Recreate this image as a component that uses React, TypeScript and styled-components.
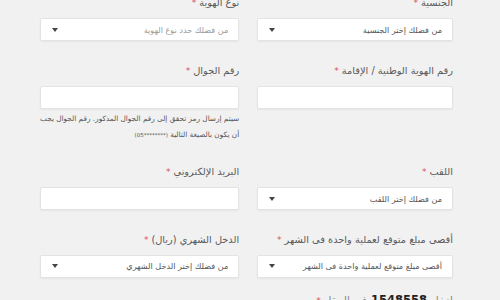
import React from "react";
import styled, { createGlobalStyle } from "styled-components";

const GlobalStyle = createGlobalStyle`
  html, body {
    margin: 0;
    padding: 0;
    background: #f1f1f1;
  }
`;

const Page = styled.div`
  width: 500px;
  height: 300px;
  overflow: hidden;
  box-sizing: border-box;
  padding: 0 47px 0 40px;
  direction: rtl;
  font-family: "DejaVu Sans", "Noto Sans", sans-serif;
  color: #555;
`;

const Form = styled.div`
  margin-top: -4px;
  display: grid;
  grid-template-columns: 1fr 1fr;
  column-gap: 18px;
  row-gap: 22.5px;
  align-items: start;
`;

const Field = styled.div`
  display: flex;
  flex-direction: column;
`;

const Label = styled.label`
  font-size: 9.8px;
  line-height: 14px;
  height: 14px;
  margin-bottom: 8px;
  color: #5a5a5a;
  white-space: nowrap;
`;

const Star = styled.span`
  color: #d9534f;
  font-size: 9px;
  margin-right: 3px;
`;

const Box = styled.div`
  box-sizing: border-box;
  height: 23px;
  background: #fff;
  border: 1px solid #e3e3e3;
  border-radius: 2px;
  box-shadow: 0 1px 2px rgba(0, 0, 0, 0.05);
`;

const SelectBox = styled(Box)<{ $muted?: boolean }>`
  display: flex;
  align-items: center;
  justify-content: space-between;
  padding: 0 10px 0 11px;
  font-size: 8.1px;
  color: ${(p) => (p.$muted ? "#9a9a9a" : "#555")};
  white-space: nowrap;
`;

const Caret = styled.span`
  width: 0;
  height: 0;
  border-left: 3.5px solid transparent;
  border-right: 3.5px solid transparent;
  border-top: 4px solid #444;
`;

const Help = styled.p`
  margin: 2px 0 0;
  font-size: 7.3px;
  line-height: 16px;
  color: #555;
  white-space: nowrap;
`;

const Small = styled.bdi`
  font-size: 5.5px;
  direction: ltr;
`;

const Code = styled.div`
  grid-column: 1 / 2;
  margin-top: -10px;
  font-size: 10.5px;
  line-height: 20px;
  color: #888;
  white-space: nowrap;
  b {
    color: #222;
    font-size: 11.5px;
    margin: 0 4px;
  }
`;

const Select: React.FC<{ text: string; muted?: boolean }> = ({ text, muted }) => (
  <SelectBox $muted={muted}>
    <span>{text}</span>
    <Caret />
  </SelectBox>
);

const Req: React.FC<{ children: React.ReactNode }> = ({ children }) => (
  <Label>
    {children}
    <Star>*</Star>
  </Label>
);

export default function App() {
  return (
    <Page>
      <GlobalStyle />
      <Form>
        <Field>
          <Req>الجنسية</Req>
          <Select text="من فضلك إختر الجنسية" />
        </Field>
        <Field>
          <Req>نوع الهوية</Req>
          <Select text="من فضلك حدد نوع الهوية" muted />
        </Field>

        <Field>
          <Req>رقم الهوية الوطنية / الإقامة</Req>
          <Box />
        </Field>
        <Field>
          <Req>رقم الجوال</Req>
          <Box />
          <Help>
            سيتم إرسال رمز تحقق إلى رقم الجوال المذكور. رقم الجوال يجب
            <br />
            أن يكون بالصيغة التالية <Small>(05********)</Small>
          </Help>
        </Field>

        <Field>
          <Req>اللقب</Req>
          <Select text="من فضلك إختر اللقب" />
        </Field>
        <Field>
          <Req>البريد الإلكتروني</Req>
          <Box />
        </Field>

        <Field>
          <Req>أقصى مبلغ متوقع لعملية واحدة فى الشهر</Req>
          <Select text="أقصى مبلغ متوقع لعملية واحدة فى الشهر" />
        </Field>
        <Field>
          <Req>الدخل الشهري (ريال)</Req>
          <Select text="من فضلك إختر الدخل الشهري" />
        </Field>

        <Code>
          ادخل<b>1548558</b>في الحقل<Star>*</Star>
        </Code>
      </Form>
    </Page>
  );
}
